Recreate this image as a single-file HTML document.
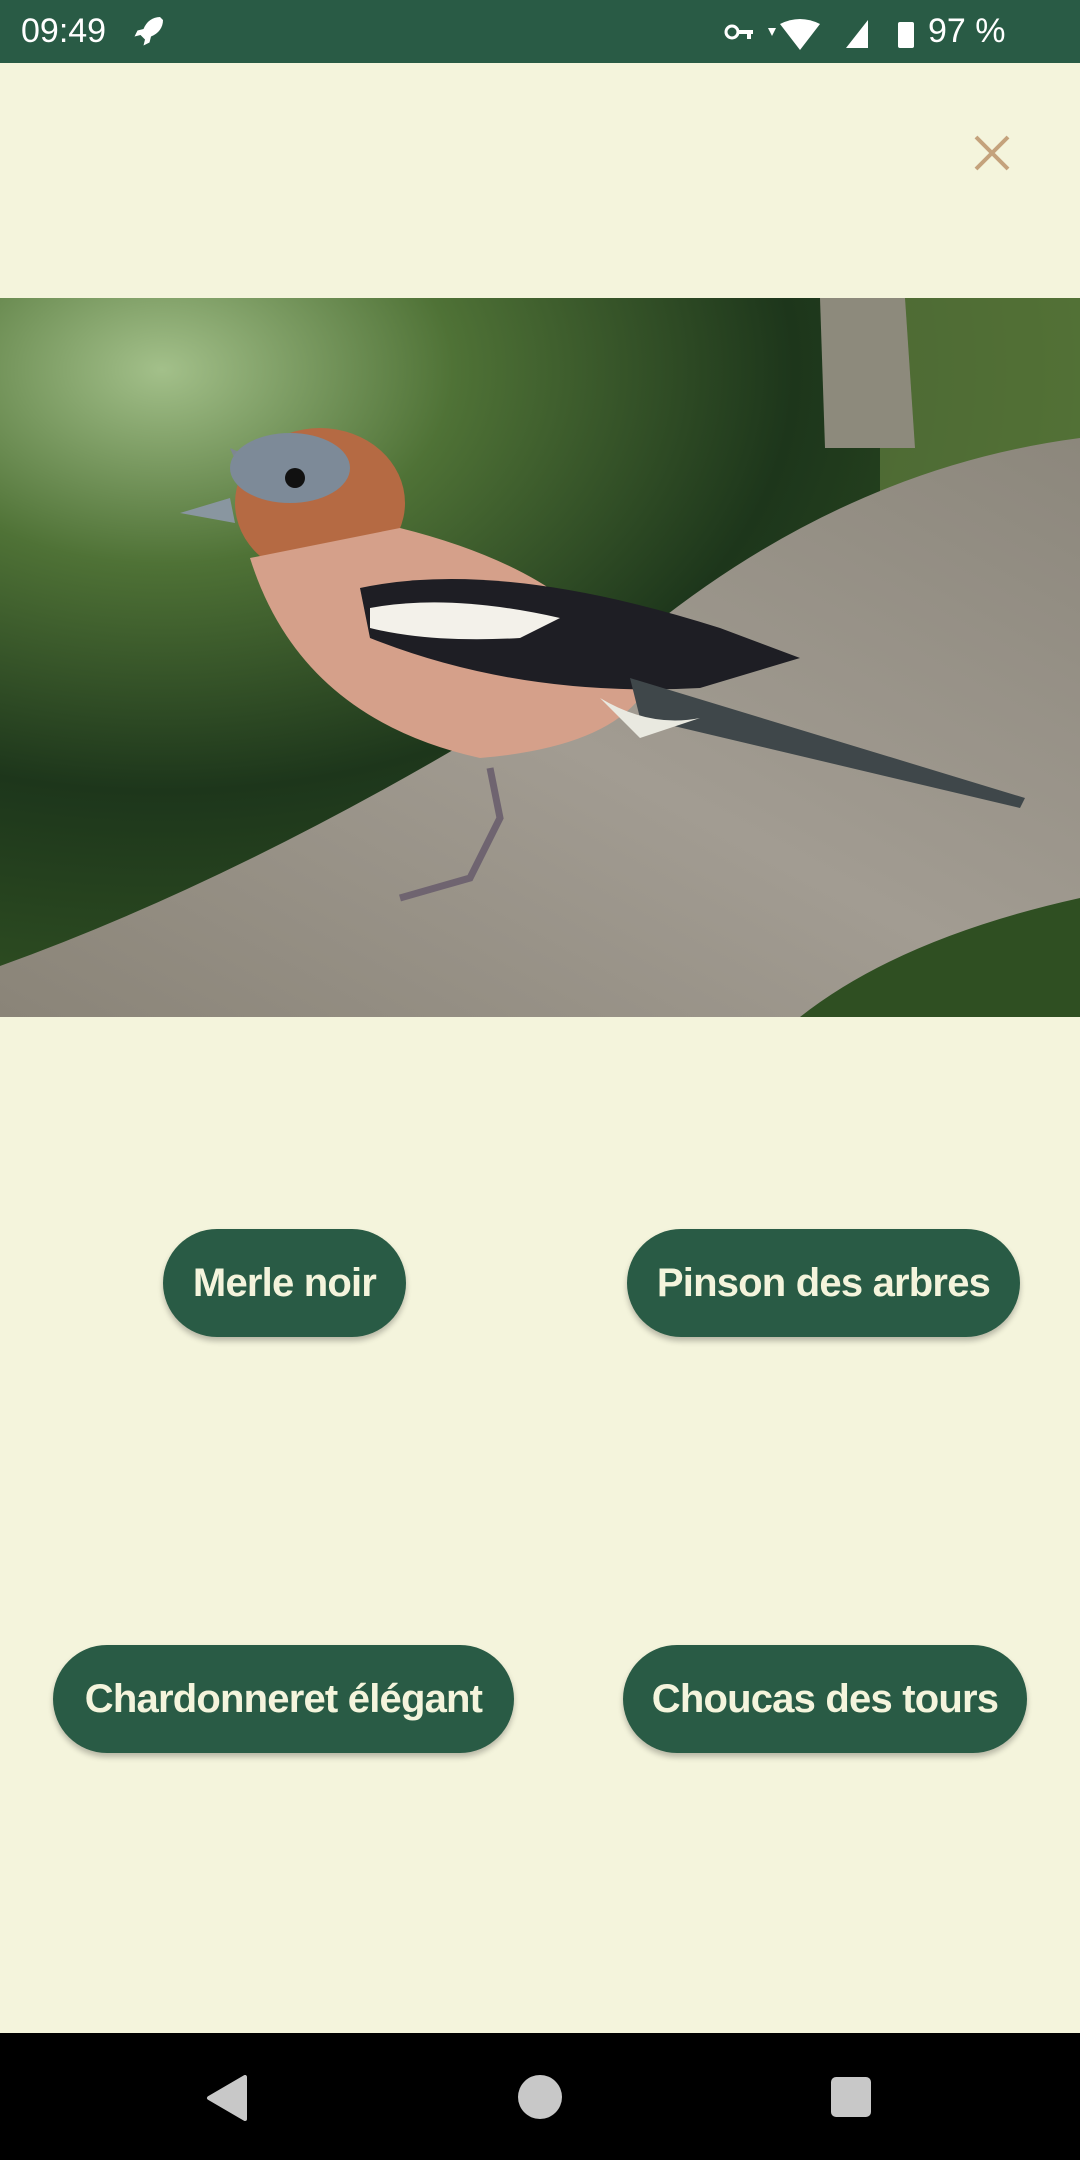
<!DOCTYPE html>
<html><head><meta charset="utf-8"><style>
*{margin:0;padding:0;box-sizing:border-box}
body{width:1080px;height:2160px;background:#f4f4dc;position:relative;overflow:hidden;font-family:"Liberation Sans",sans-serif}
.sb{position:absolute;left:0;top:0;width:1080px;height:63px;background:#295b45;color:#fff}
.btn{position:absolute;height:108px;border-radius:54px;background:#295b45;color:#f4f4dc;font-weight:bold;font-size:40px;letter-spacing:-0.8px;display:flex;align-items:center;justify-content:center;box-shadow:0 4px 6px rgba(0,0,0,.25)}
.nav{position:absolute;left:0;top:2033px;width:1080px;height:127px;background:#000}
</style></head><body>
<div class="sb">
<div style="position:absolute;left:21px;top:12px;font-size:34px">09:49</div>
<svg style="position:absolute;left:130px;top:14px" width="36" height="36" viewBox="0 0 24 24"><path fill="#fff" d="M20 2c-5 0-9 3-11 8l-4 1 -2 4 4-1 3 3-1 4 4-2 1-4c5-2 8-6 8-11z"/></svg>
<svg style="position:absolute;left:722px;top:18px" width="220" height="32" viewBox="0 0 220 32">
<circle cx="10" cy="14" r="6" fill="none" stroke="#fff" stroke-width="3"/><rect x="15" y="12" width="16" height="4" fill="#fff"/><rect x="25" y="12" width="4" height="9" fill="#fff"/>
<path d="M46 10h8l-4 8z" fill="#fff"/>
<path d="M58 6q20-10 40 0l-20 26z" fill="#fff"/>
<path d="M124 30l22-28v28z" fill="#fff"/>
<rect x="176" y="4" width="16" height="26" rx="2" fill="#fff"/>
</svg>
<div style="position:absolute;left:928px;top:12px;font-size:34px">97 %</div>
</div>
<svg style="position:absolute;left:972px;top:133px" width="40" height="40" viewBox="0 0 40 40"><path d="M4 4L36 36M36 4L4 36" stroke="#c4a27c" stroke-width="4"/></svg>
<svg style="position:absolute;left:0;top:298px" width="1080" height="719" viewBox="0 0 1080 719">
<defs>
<radialGradient id="bg" cx="0.15" cy="0.1" r="0.9"><stop offset="0" stop-color="#a3c08a"/><stop offset="0.3" stop-color="#4f7236"/><stop offset="0.65" stop-color="#1d361b"/><stop offset="1" stop-color="#2f4f22"/></radialGradient>
<linearGradient id="br" x1="0" y1="1" x2="1" y2="0"><stop offset="0" stop-color="#8a8478"/><stop offset="0.5" stop-color="#a29c92"/><stop offset="1" stop-color="#8c877c"/></linearGradient>
</defs>
<rect width="1080" height="719" fill="url(#bg)"/>
<rect x="880" y="0" width="200" height="200" fill="#6d8b45" opacity="0.6"/>
<path d="M820 0h85l10 150h-90z" fill="#8d8a7c"/>
<path d="M0 668 Q300 560 650 330 Q850 170 1080 140 V600 Q900 640 800 719 H0z" fill="url(#br)"/>
<path d="M230 150 Q250 160 300 170 L260 220 Z" fill="#7e8790"/>
<path d="M180 215 L230 200 L235 225 Z" fill="#8996a0"/>
<ellipse cx="320" cy="205" rx="85" ry="75" fill="#b56a43"/>
<ellipse cx="290" cy="170" rx="60" ry="35" fill="#7d8a98"/>
<path d="M250 260 Q300 420 480 460 Q600 450 640 400 Q600 280 400 230 Z" fill="#d5a08a"/>
<path d="M360 290 Q500 260 720 330 L800 360 L700 390 Q520 400 370 340 Z" fill="#1e1e24"/>
<path d="M370 310 Q450 295 560 320 L520 340 Q430 345 370 330 Z" fill="#f3f1ea"/>
<path d="M630 380 L1025 500 L1020 510 L640 420 Z" fill="#3f474a"/>
<path d="M600 400 Q650 430 700 420 L640 440 Z" fill="#e9e9e0"/>
<circle cx="295" cy="180" r="10" fill="#111"/>
<path d="M490 470 L500 520 L470 580 L400 600" stroke="#6f6470" stroke-width="7" fill="none"/>
</svg>
<div class="btn" style="left:163px;top:1229px;width:243px">Merle noir</div>
<div class="btn" style="left:627px;top:1229px;width:393px">Pinson des arbres</div>
<div class="btn" style="left:53px;top:1645px;width:461px">Chardonneret élégant</div>
<div class="btn" style="left:623px;top:1645px;width:404px">Choucas des tours</div>
<div class="nav">
<svg style="position:absolute;left:205px;top:42px" width="46" height="46" viewBox="0 0 46 46"><path d="M40 2V44L4 23Z" fill="#c8c8c8" stroke="#c8c8c8" stroke-linejoin="round" stroke-width="4"/></svg>
<div style="position:absolute;left:518px;top:42px;width:44px;height:44px;border-radius:50%;background:#c8c8c8"></div>
<div style="position:absolute;left:831px;top:44px;width:40px;height:40px;border-radius:5px;background:#c8c8c8"></div>
</div>
</body></html>
